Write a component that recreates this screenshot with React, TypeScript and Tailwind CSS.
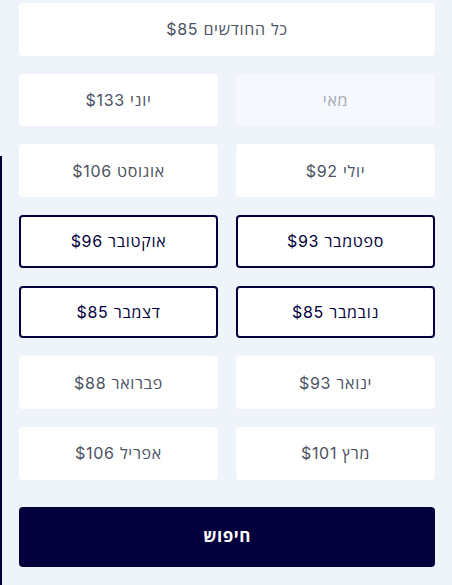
const months: { label: string; price?: number; state: 'normal' | 'disabled' | 'selected' }[] = [
  { label: 'מאי', state: 'disabled' },
  { label: 'יוני', price: 133, state: 'normal' },
  { label: 'יולי', price: 92, state: 'normal' },
  { label: 'אוגוסט', price: 106, state: 'normal' },
  { label: 'ספטמבר', price: 93, state: 'selected' },
  { label: 'אוקטובר', price: 96, state: 'selected' },
  { label: 'נובמבר', price: 85, state: 'selected' },
  { label: 'דצמבר', price: 85, state: 'selected' },
  { label: 'ינואר', price: 93, state: 'normal' },
  { label: 'פברואר', price: 88, state: 'normal' },
  { label: 'מרץ', price: 101, state: 'normal' },
  { label: 'אפריל', price: 106, state: 'normal' },
];

const cardBase = 'h-[52.67px] flex items-center justify-center rounded text-[16px] tracking-[0.7px]';

export default function App() {
  return (
    <div
      dir="rtl"
      className="relative min-h-[585px] bg-[#eff3fa] pl-[19px] pr-[17px] pt-[3px] pb-[18px]"
      style={{ fontFamily: 'Inter, "Open Sans", "Liberation Sans", sans-serif' }}
    >
      {/* stray frame edge on the left */}
      <div className="absolute left-0 top-[156px] bottom-0 w-[2px] bg-[#03003d]" />

      <div className="grid grid-cols-2 gap-x-[18px] gap-y-[18px]">
        <button className={`${cardBase} col-span-2 bg-white text-[#4b5263]`}>
          {'כל החודשים $85'}
        </button>
        {months.map((m) => (
          <button
            key={m.label}
            className={`${cardBase} ${
              m.state === 'disabled'
                ? 'bg-[#f5f8fd] text-[#a3a8b3]'
                : m.state === 'selected'
                  ? 'bg-white border-2 border-[#03003d] text-[#03003d]'
                  : 'bg-white text-[#4b5263]'
            }`}
          >
            {m.price !== undefined ? `${m.label} $${m.price}` : m.label}
          </button>
        ))}
      </div>

      <button className="mt-[27px] w-full h-[60px] rounded bg-[#03003d] text-white text-[17px] font-bold tracking-[0.5px]">
        חיפוש
      </button>
    </div>
  );
}
